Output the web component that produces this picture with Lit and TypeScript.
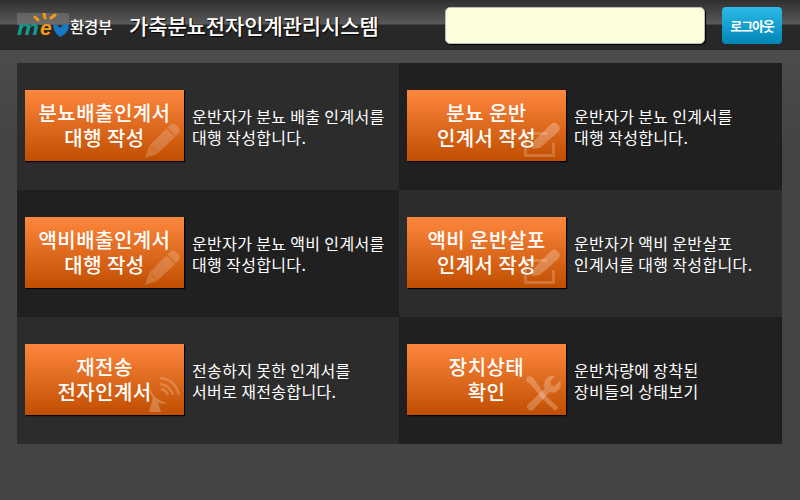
import { LitElement, html, css, svg } from "lit";
import { customElement } from "lit/decorators.js";

const pencil = svg`<svg class="ico" style="right:3px;bottom:3px" width="36" height="36" viewBox="0 0 36 36"><path d="M0 36 L4 24 L25 3 Q28 0 31 3 L34 6 Q36 9 33 12 L12 32 Z" fill="#fff" fill-opacity=".2"/><path d="M5 24 L12 31 M22 6 L30 14" stroke="#d96a1c" stroke-width="1.5"/></svg>`;
const edit = svg`<svg class="ico" style="right:6px;bottom:4px" width="36" height="36" viewBox="0 0 36 36"><path d="M0 11H23V14H3V33H28V22H31V36H0Z" fill="#fff" fill-opacity=".2"/><path d="M8 28L10 20L27 3Q30 0 33 3L35 5Q37 8 34 11L16 27Z" fill="#fff" fill-opacity=".25"/></svg>`;
const dish = svg`<svg class="ico" style="right:4px;bottom:3px" width="32" height="36" viewBox="0 0 32 36"><g fill="none" stroke="#fff" stroke-opacity=".2" stroke-width="2.5"><path d="M12 2Q27 3 31 19"/><path d="M12 8Q22 9 25 19"/><path d="M13 13Q18 14 20 19"/></g><path d="M2 11Q4 23 19 27Q13 29 10 26L13 36H1L5 22Q1 17 2 11Z" fill="#fff" fill-opacity=".25"/></svg>`;
const tools = svg`<svg class="ico" style="right:4px;bottom:3px" width="36" height="36" viewBox="0 0 38 38"><g fill="#fff" fill-opacity=".24"><path d="M1 1L5 0L9 4L20 20L34 33L31 37L17 24L5 9L0 5Z"/><path d="M36 5L30 11L26 9L26 5L31 0Q23 -1 20 5Q18 10 20 13L2 30Q0 33 2 35Q5 38 8 35L25 17Q31 19 35 14Q38 10 36 5Z"/></g></svg>`;

const items = [
  ["분뇨배출인계서", "대행 작성", "운반자가 분뇨 배출 인계서를", "대행 작성합니다.", pencil, "l"],
  ["분뇨 운반", "인계서 작성", "운반자가 분뇨 인계서를", "대행 작성합니다.", edit, "d"],
  ["액비배출인계서", "대행 작성", "운반자가 분뇨 액비 인계서를", "대행 작성합니다.", pencil, "d"],
  ["액비 운반살포", "인계서 작성", "운반자가 액비 운반살포", "인계서를 대행 작성합니다.", edit, "l"],
  ["재전송", "전자인계서", "전송하지 못한 인계서를", "서버로 재전송합니다.", dish, "l"],
  ["장치상태", "확인", "운반차량에 장착된", "장비들의 상태보기", tools, "d"],
] as const;

@customElement("app-root")
export class AppRoot extends LitElement {
  static styles = css`
    :host { display: block; width: 800px; height: 500px; overflow: hidden; background: linear-gradient(#4c4c4c 50px, #444 140px);
      font-family: "Noto Sans CJK KR", "Noto Sans", sans-serif; color: #fff; }
    header { height: 50px; box-sizing: border-box; display: flex; align-items: center; padding: 0 18px 0 17px;
      background: linear-gradient(#2f2f2f 0, #5a5a5a 24px, #282828 25px, #282828 100%); }
    .logo { display: flex; align-items: center; width: 95px; margin-top: 1px; }
    .logo svg { flex: none; }
    .ko { font-size: 15.5px; font-weight: 500; letter-spacing: -0.2px; white-space: nowrap; }
    h1 { margin: 0 0 0 17px; font-size: 21px; font-weight: 500; letter-spacing: -0.12px; line-height: 50px; flex: 1; white-space: nowrap; text-shadow: 1px 1px 1px #000; }
    .msg { width: 260px; height: 37px; box-sizing: border-box; background: #fdffda; border-radius: 5px; border: 1px solid #bbb; margin-right: 17px; box-shadow: 1px 1px 1px #000; }
    .logout { width: 60px; height: 37px; border-radius: 4px; background: linear-gradient(#2cbbea, #0084b4); display: flex; align-items: center; justify-content: center; font-size: 13px; font-weight: 700; letter-spacing: -1.1px; margin-top: 1px; }
    .grid { margin: 13px 18px 0 17px; display: grid; grid-template-columns: 382px 383px; grid-auto-rows: 127px; }
    .cell { display: flex; align-items: center; padding: 0 0 2px 8px; box-sizing: border-box; gap: 8px; }
    .l { background: #2c2c2c; }
    .d { background: #202020; }
    .btn { position: relative; width: 159px; height: 71px; box-sizing: border-box; padding-bottom: 2px; flex: none; background: linear-gradient(#fd873e, #c04e00); box-shadow: 1px 1px 1px #000; display: flex; align-items: center; justify-content: center; text-align: center; font-size: 20px; font-weight: 500; line-height: 25px; letter-spacing: 0.45px; overflow: hidden; }
    .btn span { position: relative; }
    .ico { position: absolute; }
    .desc { font-size: 16px; line-height: 21px; letter-spacing: 0.35px; white-space: nowrap; padding-top: 2px; }
  `;
  render() {
    return html`
      <header>
        <div class="logo">
          <svg width="53" height="26" viewBox="0 0 53 26">
            <rect x="0" y="0" width="52" height="12" fill="#777" opacity=".6"/>
            <text x="0" y="22" font-family="Liberation Sans" font-style="italic" font-weight="700" font-size="20" fill="#12988c" textLength="22" lengthAdjust="spacingAndGlyphs">m</text>
            <text x="23" y="22" font-family="Liberation Sans" font-style="italic" font-weight="700" font-size="21" fill="#f39a12">e</text>
            <path d="M36 12Q40 10 43 15Q47 9 52 12Q52 20 43 24Q37 20 36 12Z" fill="#1679c4"/>
            <g stroke="#f39a12" stroke-width="3" stroke-linecap="round"><path d="M27 1L28 5M38 2L34 5M18 4L21 7"/></g>
          </svg>
          <span class="ko">환경부</span>
        </div>
        <h1>가축분뇨전자인계관리시스템</h1>
        <div class="msg"></div>
        <div class="logout">로그아웃</div>
      </header>
      <div class="grid">
        ${items.map(([a, b, c, d, icon, tone]) => html`
          <div class="cell ${tone}">
            <div class="btn">${icon}<span>${a}<br />${b}</span></div>
            <div class="desc">${c}<br />${d}</div>
          </div>`)}
      </div>`;
  }
}
